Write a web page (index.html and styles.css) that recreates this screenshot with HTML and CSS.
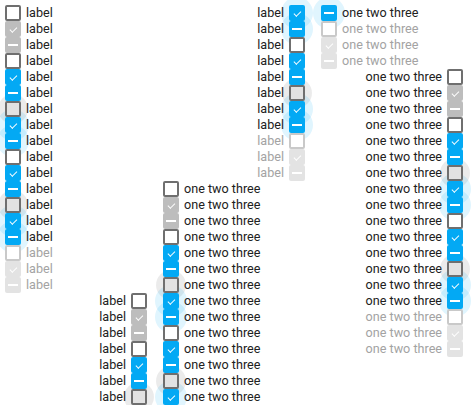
FILE: index.html
```html
<!DOCTYPE html>
<html>
<head>
<meta charset="utf-8">
<link rel="stylesheet" href="styles.css">
</head>
<body>
<div class="flow">
  <div class="row after u"><span class="box"></span><span class="lbl">label</span></div>
  <div class="row after cg"><span class="box"></span><span class="lbl">label</span></div>
  <div class="row after ig"><span class="box"></span><span class="lbl">label</span></div>
  <div class="row after u"><span class="box"></span><span class="lbl">label</span></div>
  <div class="row after c"><span class="box"></span><span class="lbl">label</span></div>
  <div class="row after i"><span class="box"></span><span class="lbl">label</span></div>
  <div class="row after uh"><span class="box"></span><span class="lbl">label</span></div>
  <div class="row after ch"><span class="box"></span><span class="lbl">label</span></div>
  <div class="row after ih"><span class="box"></span><span class="lbl">label</span></div>
  <div class="row after u"><span class="box"></span><span class="lbl">label</span></div>
  <div class="row after c"><span class="box"></span><span class="lbl">label</span></div>
  <div class="row after i"><span class="box"></span><span class="lbl">label</span></div>
  <div class="row after uh"><span class="box"></span><span class="lbl">label</span></div>
  <div class="row after ch"><span class="box"></span><span class="lbl">label</span></div>
  <div class="row after ih"><span class="box"></span><span class="lbl">label</span></div>
  <div class="row after du"><span class="box"></span><span class="lbl">label</span></div>
  <div class="row after dc"><span class="box"></span><span class="lbl">label</span></div>
  <div class="row after di"><span class="box"></span><span class="lbl">label</span></div>

  <div class="row before u"><span class="lbl">label</span><span class="box"></span></div>
  <div class="row before cg"><span class="lbl">label</span><span class="box"></span></div>
  <div class="row before ig"><span class="lbl">label</span><span class="box"></span></div>
  <div class="row before u"><span class="lbl">label</span><span class="box"></span></div>
  <div class="row before c"><span class="lbl">label</span><span class="box"></span></div>
  <div class="row before i"><span class="lbl">label</span><span class="box"></span></div>
  <div class="row before uh"><span class="lbl">label</span><span class="box"></span></div>
  <div class="row before ch"><span class="lbl">label</span><span class="box"></span></div>
  <div class="row before ih"><span class="lbl">label</span><span class="box"></span></div>
  <div class="row before u"><span class="lbl">label</span><span class="box"></span></div>
  <div class="row before c"><span class="lbl">label</span><span class="box"></span></div>
  <div class="row before i"><span class="lbl">label</span><span class="box"></span></div>
  <div class="row before uh"><span class="lbl">label</span><span class="box"></span></div>
  <div class="row before ch"><span class="lbl">label</span><span class="box"></span></div>
  <div class="row before ih"><span class="lbl">label</span><span class="box"></span></div>
  <div class="row before du"><span class="lbl">label</span><span class="box"></span></div>
  <div class="row before dc"><span class="lbl">label</span><span class="box"></span></div>
  <div class="row before di"><span class="lbl">label</span><span class="box"></span></div>

  <div class="row after u"><span class="box"></span><span class="lbl">one two three</span></div>
  <div class="row after cg"><span class="box"></span><span class="lbl">one two three</span></div>
  <div class="row after ig"><span class="box"></span><span class="lbl">one two three</span></div>
  <div class="row after u"><span class="box"></span><span class="lbl">one two three</span></div>
  <div class="row after c"><span class="box"></span><span class="lbl">one two three</span></div>
  <div class="row after i"><span class="box"></span><span class="lbl">one two three</span></div>
  <div class="row after uh"><span class="box"></span><span class="lbl">one two three</span></div>
  <div class="row after ch"><span class="box"></span><span class="lbl">one two three</span></div>
  <div class="row after ih"><span class="box"></span><span class="lbl">one two three</span></div>
  <div class="row after u"><span class="box"></span><span class="lbl">one two three</span></div>
  <div class="row after c"><span class="box"></span><span class="lbl">one two three</span></div>
  <div class="row after i"><span class="box"></span><span class="lbl">one two three</span></div>
  <div class="row after uh"><span class="box"></span><span class="lbl">one two three</span></div>
  <div class="row after ch"><span class="box"></span><span class="lbl">one two three</span></div>
  <div class="row after ih"><span class="box"></span><span class="lbl">one two three</span></div>
  <div class="row after du"><span class="box"></span><span class="lbl">one two three</span></div>
  <div class="row after dc"><span class="box"></span><span class="lbl">one two three</span></div>
  <div class="row after di"><span class="box"></span><span class="lbl">one two three</span></div>

  <div class="row before u"><span class="lbl">one two three</span><span class="box"></span></div>
  <div class="row before cg"><span class="lbl">one two three</span><span class="box"></span></div>
  <div class="row before ig"><span class="lbl">one two three</span><span class="box"></span></div>
  <div class="row before u"><span class="lbl">one two three</span><span class="box"></span></div>
  <div class="row before c"><span class="lbl">one two three</span><span class="box"></span></div>
  <div class="row before i"><span class="lbl">one two three</span><span class="box"></span></div>
  <div class="row before uh"><span class="lbl">one two three</span><span class="box"></span></div>
  <div class="row before ch"><span class="lbl">one two three</span><span class="box"></span></div>
  <div class="row before ih"><span class="lbl">one two three</span><span class="box"></span></div>
  <div class="row before u"><span class="lbl">one two three</span><span class="box"></span></div>
  <div class="row before c"><span class="lbl">one two three</span><span class="box"></span></div>
  <div class="row before i"><span class="lbl">one two three</span><span class="box"></span></div>
  <div class="row before uh"><span class="lbl">one two three</span><span class="box"></span></div>
  <div class="row before ch"><span class="lbl">one two three</span><span class="box"></span></div>
  <div class="row before ih"><span class="lbl">one two three</span><span class="box"></span></div>
  <div class="row before du"><span class="lbl">one two three</span><span class="box"></span></div>
  <div class="row before dc"><span class="lbl">one two three</span><span class="box"></span></div>
  <div class="row before di"><span class="lbl">one two three</span><span class="box"></span></div>
</div>
</body>
</html>
```
FILE: styles.css
```css
html, body {
  margin: 0;
  padding: 0;
  background: #ffffff;
}

.flow {
  position: relative;
  z-index: 0;
  box-sizing: border-box;
  height: 405px;
  padding: 5px 0 0 5px;
  display: flex;
  flex-direction: column;
  flex-wrap: wrap;
  align-content: flex-start;
  column-gap: 16px;
  font-family: Roboto, "Liberation Sans", sans-serif;
  font-size: 12.6px;
  color: #212121;
}

.row {
  display: flex;
  align-items: center;
  gap: 5px;
  width: 142px;
  height: 16px;
  line-height: 16px;
  white-space: nowrap;
}

.row.after { justify-content: flex-start; }
.row.before { justify-content: flex-end; }

.lbl {
  display: block;
}

.box {
  position: relative;
  display: block;
  flex: none;
  width: 16px;
  height: 16px;
  box-sizing: border-box;
  border-radius: 2px;
  background: #ffffff;
}

/* halo */
.box::before {
  content: "";
  position: absolute;
  left: 50%;
  top: 50%;
  width: 30px;
  height: 30px;
  margin: -15px 0 0 -15px;
  border-radius: 50%;
  z-index: -1;
  display: none;
}

/* mark */
.box::after {
  content: "";
  position: absolute;
  display: none;
}

/* unchecked */
.u .box, .uh .box {
  border: 2px solid #6f6f6f;
}
.uh .box {
  background: #e2e2e2;
}
.uh .box::before {
  display: block;
  background: rgba(0, 0, 0, 0.08);
}

/* checked / indeterminate fills */
.c .box, .i .box, .ch .box, .ih .box {
  background: #03a9f4;
}
.cg .box, .ig .box {
  background: #bdbdbd;
}
.dc .box, .di .box {
  background: #e3e3e3;
}
.du .box {
  border: 2px solid #c9c9c9;
}

.ch .box::before, .ih .box::before {
  display: block;
  width: 32px;
  height: 32px;
  margin: -16px 0 0 -16px;
  background: rgba(3, 169, 244, 0.12);
}

/* check mark */
.c .box::after, .ch .box::after, .cg .box::after, .dc .box::after {
  display: block;
  left: 6.5px;
  top: 7.5px;
  width: 7px;
  height: 3.5px;
  box-sizing: border-box;
  border-left: 1.5px solid #ffffff;
  border-bottom: 1.5px solid #ffffff;
  transform-origin: left bottom;
  transform: rotate(-45deg);
}

/* indeterminate dash */
.i .box::after, .ih .box::after, .ig .box::after, .di .box::after {
  display: block;
  left: 3px;
  top: 7.25px;
  width: 10px;
  height: 1.5px;
  background: #ffffff;
}

/* disabled labels */
.du .lbl, .dc .lbl, .di .lbl {
  color: #a3a3a3;
}
```
